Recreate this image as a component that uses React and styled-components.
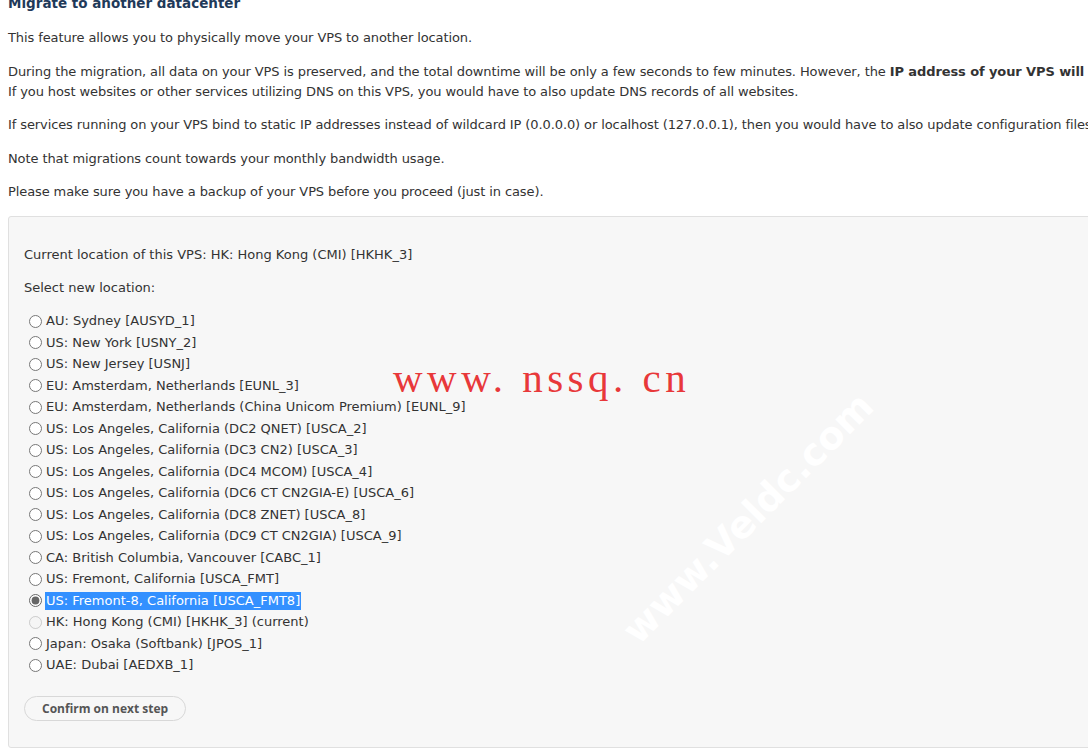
import styled, { createGlobalStyle } from "styled-components";

const Global = createGlobalStyle`
  html, body { margin: 0; padding: 0; background: #fff; overflow: hidden; }
  body { font-family: "DejaVu Sans", Verdana, sans-serif; font-size: 13px; color: #333; }
`;

const Page = styled.div`
  position: relative;
  width: 1400px;
  padding: 0 8px;
  margin-top: -6px;
`;

const Heading = styled.h2`
  margin: 0 0 16px;
  font-size: 13.5px;
  font-weight: bold;
  color: #1f3a5a;
  line-height: 18px;
`;

const Para = styled.p`
  margin: 0 0 13.5px;
  line-height: 20px;
  letter-spacing: -0.1px;
`;

const Panel = styled.div`
  background: #f7f7f7;
  border: 1px solid #e0e0e0;
  border-radius: 3px;
  padding: 28px 15px 26px;
`;

const Line = styled.p`
  margin: 0 0 13px;
  line-height: 20px;
`;

const List = styled.div`
  display: flex;
  flex-direction: column;
  margin: 13px 0 20px 4px;
`;

const Option = styled.label`
  display: flex;
  align-items: center;
  height: 21.5px;
`;

const Radio = styled.input`
  margin: 0 3px 0 1px;
  width: 13px;
  height: 13px;
  accent-color: #666;
`;

const Label = styled.span`
  padding: 1px 1px;
  line-height: 16px;
  background: ${(p) => (p.$selected ? "#3390ff" : "transparent")};
  color: ${(p) => (p.$selected ? "#fff" : "inherit")};
`;

const Button = styled.button`
  font-family: "Open Sans", "DejaVu Sans", sans-serif;
  font-weight: bold;
  font-size: 12px;
  color: #555;
  background: #f7f7f7;
  border: 1px solid #d8d8d8;
  border-radius: 13px;
  padding: 0 17px;
  height: 25px;
`;

const RedMark = styled.div`
  position: absolute;
  left: 393px;
  top: 360px;
  font-family: "Liberation Serif", "DejaVu Serif", serif;
  font-size: 41px;
  color: #e8383a;
  letter-spacing: 4.5px;
  white-space: pre;
`;

const WhiteMark = styled.div`
  position: absolute;
  left: 580px;
  top: 502px;
  transform: rotate(-45deg);
  font-family: "DejaVu Sans", sans-serif;
  font-weight: bold;
  font-size: 38px;
  color: #ffffff;
  white-space: nowrap;
`;

const locations = [
  "AU: Sydney [AUSYD_1]",
  "US: New York [USNY_2]",
  "US: New Jersey [USNJ]",
  "EU: Amsterdam, Netherlands [EUNL_3]",
  "EU: Amsterdam, Netherlands (China Unicom Premium) [EUNL_9]",
  "US: Los Angeles, California (DC2 QNET) [USCA_2]",
  "US: Los Angeles, California (DC3 CN2) [USCA_3]",
  "US: Los Angeles, California (DC4 MCOM) [USCA_4]",
  "US: Los Angeles, California (DC6 CT CN2GIA-E) [USCA_6]",
  "US: Los Angeles, California (DC8 ZNET) [USCA_8]",
  "US: Los Angeles, California (DC9 CT CN2GIA) [USCA_9]",
  "CA: British Columbia, Vancouver [CABC_1]",
  "US: Fremont, California [USCA_FMT]",
  "US: Fremont-8, California [USCA_FMT8]",
  "HK: Hong Kong (CMI) [HKHK_3] (current)",
  "Japan: Osaka (Softbank) [JPOS_1]",
  "UAE: Dubai [AEDXB_1]",
];

export default function App() {
  return (
    <>
      <Global />
      <Page>
        <Heading>Migrate to another datacenter</Heading>
        <Para>This feature allows you to physically move your VPS to another location.</Para>
        <Para>
          During the migration, all data on your VPS is preserved, and the total downtime will be only a few seconds to few minutes. However, the{" "}
          <b>IP address of your VPS will change</b>.
          <br />
          If you host websites or other services utilizing DNS on this VPS, you would have to also update DNS records of all websites.
        </Para>
        <Para>
          If services running on your VPS bind to static IP addresses instead of wildcard IP (0.0.0.0) or localhost (127.0.0.1), then you would have to also update configuration files.
        </Para>
        <Para>Note that migrations count towards your monthly bandwidth usage.</Para>
        <Para>Please make sure you have a backup of your VPS before you proceed (just in case).</Para>
        <Panel>
          <Line>Current location of this VPS: HK: Hong Kong (CMI) [HKHK_3]</Line>
          <Line>Select new location:</Line>
          <List>
            {locations.map((loc, i) => {
              const selected = i === 13;
              const disabled = i === 14;
              return (
                <Option key={loc}>
                  <Radio type="radio" name="loc" defaultChecked={selected} disabled={disabled} />
                  <Label $selected={selected}>{loc}</Label>
                </Option>
              );
            })}
          </List>
          <Button>Confirm on next step</Button>
        </Panel>
        <RedMark>www. nssq. cn</RedMark>
        <WhiteMark>www.Veldc.com</WhiteMark>
      </Page>
    </>
  );
}
